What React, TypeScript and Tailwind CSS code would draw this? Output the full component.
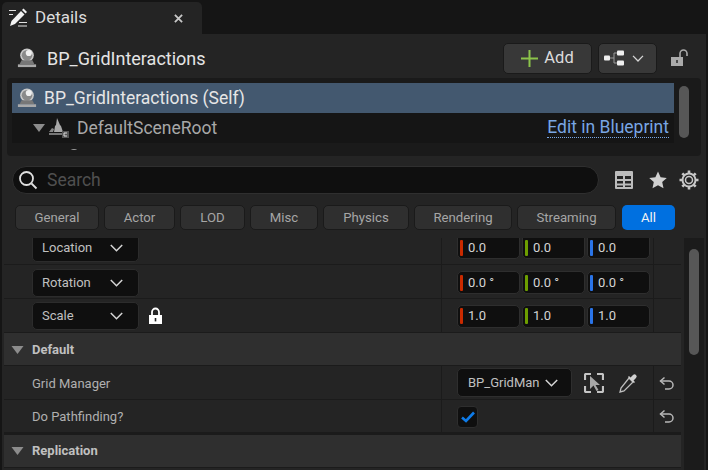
import type { ReactNode } from 'react';

const filters = [
  { label: 'General', w: 'w-[84px]' },
  { label: 'Actor', w: 'w-[71px]' },
  { label: 'LOD', w: 'w-[65px]' },
  { label: 'Misc', w: 'w-[68px]' },
  { label: 'Physics', w: 'w-[86px]' },
  { label: 'Rendering', w: 'w-[98px]' },
  { label: 'Streaming', w: 'w-[99px]' },
];

function Chevron({ className = 'w-[13px] h-[8px]' }: { className?: string }) {
  return (
    <svg viewBox="0 0 13 8" className={`${className} shrink-0`} fill="none" stroke="#d6d6d6" strokeWidth="1.500">
      <path d="M.8 1 6.500 6.800 12.200 1" />
    </svg>
  );
}

function ActorIcon({ className }: { className: string }) {
  return (
    <svg viewBox="0 0 22 22" className={className}>
      <circle cx="11" cy="8" r="7.500" fill="#c9c9c9" />
      <circle cx="11" cy="8" r="5.800" fill="#8a8a8a" />
      <circle cx="13" cy="5.500" r="3.400" fill="#efefef" />
      <path d="M5 13.500h12l2 4H3z" fill="#777" />
      <path d="M1 18h20v3H1z" fill="#a9a9a9" />
    </svg>
  );
}

function Triangle({ className }: { className: string }) {
  return (
    <svg viewBox="0 0 12 8" className={className}>
      <path d="M0 0h12L6 8z" fill="#8c8c8c" />
    </svg>
  );
}

function ResetArrow() {
  return (
    <svg viewBox="0 0 16 14" className="w-[16px] h-[14px]" fill="none" stroke="#b8b8b8" strokeWidth="1.500">
      <path d="M5.500 1.500 1.500 5l4 3.500" />
      <path d="M1.500 5H10a4 4 0 0 1 0 8H6" />
    </svg>
  );
}

function Lock() {
  return (
    <svg viewBox="0 0 15 17" className="w-[15px] h-[17px]">
      <path d="M4 8V5a3.500 3.500 0 0 1 7 0v3" fill="none" stroke="#fff" strokeWidth="1.800" />
      <path d="M1 8h13v9H1z" fill="#fff" />
      <path d="M6.700 11h1.600v3.400H6.700z" fill="#222" />
    </svg>
  );
}

function TransformSelect({ label, clipped }: { label: string; clipped?: boolean }) {
  return (
    <div
      className={`w-[107px] h-[28px] bg-[#0f0f0f] border border-[#2c2c2c] flex items-center justify-between pl-[9px] pr-[15px] text-[13px] text-[#c0c0c0] ${
        clipped ? 'rounded-b-[5px]' : 'rounded-[5px]'
      }`}
    >
      <span>{label}</span>
      <Chevron />
    </div>
  );
}

function VectorField({ value, color, clipped }: { value: string; color: string; clipped?: boolean }) {
  return (
    <div
      className={`w-[63px] h-[23px] bg-[#0f0f0f] border border-[#2e2e2e] flex items-center pl-[2px] gap-[4px] text-[13px] text-[#d4d4d4] ${
        clipped ? 'rounded-b-[5px]' : 'rounded-[5px]'
      }`}
    >
      <div className={`w-[3px] h-[16px] rounded-[1px] ${color}`} />
      <span className="ml-[1px]">{value}</span>
    </div>
  );
}

function VectorGroup({ values, clipped }: { values: string[]; clipped?: boolean }) {
  const colors = ['bg-[#c92a00]', 'bg-[#6d9e00]', 'bg-[#2a74e8]'];
  return (
    <div className="flex gap-[2px]">
      {values.map((v, i) => (
        <VectorField key={i} value={v} color={colors[i]} clipped={clipped} />
      ))}
    </div>
  );
}

function Row({ left, right, reset, height, leftAlign = 'items-center', rightAlign = 'items-center' }: {
  left: ReactNode;
  right: ReactNode;
  reset?: boolean;
  height: string;
  leftAlign?: string;
  rightAlign?: string;
}) {
  return (
    <div className={`flex ${height} bg-[#242424] border-b border-[#1b1b1b] overflow-hidden`}>
      <div className={`w-[437px] flex ${leftAlign} pl-[28px] gap-[9px]`}>{left}</div>
      <div className={`w-[212px] border-l border-[#1b1b1b] flex ${rightAlign} pl-[15px]`}>{right}</div>
      <div className="flex-1 border-l border-[#1b1b1b] flex items-center justify-center pr-[2px]">
        {reset && <ResetArrow />}
      </div>
    </div>
  );
}

function SectionHeader({ label, nudge }: { label: string; nudge?: string }) {
  return (
    <div className={`h-[33px] bg-[#2f2f2f] border-b border-[#1b1b1b] flex items-center pl-[7px] gap-[8px] ${nudge ?? ''}`}>
      <Triangle className="w-[13px] h-[8px]" />
      <span className="text-[13px] font-bold text-[#c0c0c0]">{label}</span>
    </div>
  );
}

export default function App() {
  return (
    <div className="w-[708px] h-[470px] overflow-hidden bg-[#151515] flex flex-col font-['Roboto',sans-serif]">
      {/* Tab strip */}
      <div className="h-[34px] pt-[2px] pl-[2px] flex shrink-0">
        <div className="w-[200px] h-[32px] bg-[#242424] rounded-t-[5px] flex items-center pl-[6px]">
          <svg viewBox="0 0 20 20" className="w-[20px] h-[20px]" fill="none" stroke="#e2e2e2">
            <path d="M1 2.500h7M1 6.500h4M10 18h9M11 14.500h8" strokeWidth="1.100" />
            <path d="M2 18l1.500-5L13 3l3.500 3.500L7 16z" fill="#f2f2f2" stroke="none" />
            <path d="M14 2l1.500-1.500L19 4l-1.500 1.500z" fill="#f2f2f2" stroke="none" />
          </svg>
          <span className="ml-[7px] text-[17px] text-[#dcdcdc]">Details</span>
          <svg viewBox="0 0 10 10" className="w-[9px] h-[9px] ml-[87px]" stroke="#c8c8c8" strokeWidth="2">
            <path d="M1 1l8 8M9 1l-8 8" />
          </svg>
        </div>
      </div>

      {/* Panel */}
      <div className="flex-1 ml-[2px] mr-[2px] bg-[#242424] flex flex-col min-h-0">
        {/* Actor title */}
        <div className="h-[44px] shrink-0 flex items-center pt-[4px] pl-[15px] pr-[17px]">
          <ActorIcon className="w-[20px] h-[20px]" />
          <span className="ml-[10px] text-[18px] text-[#e4e4e4]">BP_GridInteractions</span>
          <div className="ml-auto flex items-center">
            <div className="w-[89px] h-[31px] bg-[#383838] border border-[#1a1a1a] rounded-[5px] flex items-center justify-center gap-[6px]">
              <svg viewBox="0 0 17 17" className="w-[17px] h-[17px]" stroke="#8bc34a" strokeWidth="2">
                <path d="M8.500 0v17M0 8.500h17" />
              </svg>
              <span className="text-[16.5px] text-[#dcdcdc]">Add</span>
            </div>
            <div className="ml-[6px] w-[59px] h-[31px] bg-[#383838] border border-[#1a1a1a] rounded-[5px] flex items-center pl-[5px] gap-[8px]">
              <svg viewBox="0 0 20 16" className="w-[20px] h-[16px]">
                <path d="M6 8h4M10 3v10M10 3h3M10 13h3" stroke="#9a9a9a" fill="none" />
                <rect x="0" y="5.500" width="6" height="5" rx="1" fill="#f0f0f0" />
                <rect x="13" y="0.500" width="7" height="5" rx="1" fill="#f0f0f0" />
                <rect x="13" y="10.500" width="7" height="5" rx="1" fill="#f0f0f0" />
              </svg>
              <Chevron className="w-[12px] h-[7px]" />
            </div>
            <svg viewBox="0 0 18 18" className="ml-[14px] w-[18px] h-[18px]">
              <path d="M9 8V4.500a3.500 3.500 0 0 1 7 0V7" fill="none" stroke="#aaa" strokeWidth="1.600" />
              <path d="M0 8h12v9H0z" fill="#aaa" />
              <path d="M5.300 11h1.400v3H5.300z" fill="#222" />
            </svg>
          </div>
        </div>

        {/* Component tree */}
        <div className="mx-[5px] h-[78px] shrink-0 bg-[#1a1a1a] rounded-[4px] flex pl-[5px] pt-[5px] pr-[5px] overflow-hidden">
          <div className="w-[662px] flex flex-col overflow-hidden h-[67px]">
            <div className="h-[30px] shrink-0 bg-[#43586f] flex items-center pl-[5px]">
              <ActorIcon className="w-[20px] h-[20px]" />
              <span className="ml-[7px] text-[17.5px] text-[#e6e6e6]">BP_GridInteractions (Self)</span>
            </div>
            <div className="h-[30px] shrink-0 bg-[#151515] flex items-center pl-[21px] pr-[5px]">
              <Triangle className="w-[12px] h-[8px]" />
              <svg viewBox="0 0 20 20" className="ml-[4px] w-[20px] h-[20px]">
                <path d="M8 0l3 7 1 1 2 6H5l1-6 1-1z" fill="#a8a8a8" />
                <path d="M0 14l3-4 2 1-1 3z" fill="#888" />
                <path d="M0 15h13v2H0z" fill="#777" />
                <path d="M13 13h7v7h-7z" fill="#555" />
                <path d="M18 15h-3v3h3" stroke="#ddd" fill="none" />
              </svg>
              <span className="ml-[8px] text-[17.5px] text-[#a8a8a8]">DefaultSceneRoot</span>
              <span className="ml-auto text-[17.5px] text-[#79a6e4] leading-[19px] border-b border-dotted border-[#79a6e4]">
                Edit in Blueprint
              </span>
            </div>
            <div className="h-[7px] shrink-0 bg-[#1a1a1a] overflow-hidden relative">
              <div className="absolute left-[56px] top-[6px] w-[12px] h-[12px] rounded-full bg-[#999]" />
            </div>
          </div>
          <div className="ml-[5px] mt-[3px] w-[10px] h-[52px] rounded-full bg-[#575757]" />
        </div>

        {/* Search */}
        <div className="shrink-0 h-[28px] mt-[10px] ml-[10px] mr-[7px] flex items-center">
          <div className="w-[587px] h-[28px] rounded-full bg-[#0f0f0f] border border-[#2f2f2f] flex items-center pl-[5px] gap-[9px]">
            <svg viewBox="0 0 20 20" className="w-[20px] h-[20px]" fill="none" stroke="#e0e0e0" strokeWidth="1.800">
              <circle cx="8.500" cy="8.500" r="6.500" />
              <path d="M13.500 13.500 18.500 18.500" />
            </svg>
            <span className="text-[17.5px] text-[#4f4f4f]">Search</span>
          </div>
          <svg viewBox="0 0 18 18" className="ml-[16px] w-[18px] h-[18px]">
            <path fillRule="evenodd" d="M1 0h16a1 1 0 0 1 1 1v16a1 1 0 0 1-1 1H1a1 1 0 0 1-1-1V1a1 1 0 0 1 1-1zM2 5v3h6V5zM10 5v3h6V5zM2 10v2.500h6V10zM10 10v2.500h6V10zM2 14.500V16h6v-1.500zM10 14.500V16h6v-1.500z" fill="#bcbcbc" />
          </svg>
          <svg viewBox="0 0 18 18" className="ml-[16px] w-[18px] h-[18px]">
            <path d="M9 .500l2.600 5.700 6.200.7-4.600 4.200 1.300 6.100L9 14.200l-5.500 3 1.300-6.100L.2 6.900l6.200-.7z" fill="#d0d0d0" />
          </svg>
          <svg viewBox="0 0 20 20" className="ml-[12px] w-[20px] h-[20px]" fill="none" stroke="#c8c8c8">
            <circle cx="10" cy="10" r="6.500" strokeWidth="2" />
            <circle cx="10" cy="10" r="3.500" strokeWidth="1.500" />
            <path d="M10 .500v3M10 16.500v3M.5 10h3M16.500 10h3M3.300 3.300l2.100 2.100M14.600 14.600l2.100 2.100M3.300 16.700l2.100-2.100M14.600 5.400l2.100-2.100" strokeWidth="2.600" />
          </svg>
        </div>

        {/* Filter pills */}
        <div className="shrink-0 h-[25px] mt-[11px] ml-[13px] flex gap-[5px]">
          {filters.map((f) => (
            <div
              key={f.label}
              className={`${f.w} bg-[#2f2f2f] border border-[#1a1a1a] rounded-[5px] flex items-center justify-center text-[13.2px] text-[#a6a6a6]`}
            >
              {f.label}
            </div>
          ))}
          <div className="w-[53px] ml-[1px] bg-[#0070e0] rounded-[5px] flex items-center justify-center text-[13.2px] text-[#f2f2f2]">
            All
          </div>
        </div>

        {/* Property list */}
        <div className="flex-1 mt-[8px] flex min-h-0 overflow-hidden">
          <div className="w-[677px] ml-[2px] flex flex-col">
            <Row
              height="h-[27px]"
              leftAlign="items-end pb-[2px]"
              rightAlign="items-end pb-[5px]"
              left={<TransformSelect label="Location" clipped />}
              right={<VectorGroup values={['0.0', '0.0', '0.0']} clipped />}
            />
            <Row
              height="h-[34px]"
              leftAlign="items-center pt-[2px]"
              rightAlign="items-center pt-[2px]"
              left={<TransformSelect label="Rotation" />}
              right={<VectorGroup values={['0.0 °', '0.0 °', '0.0 °']} />}
            />
            <Row
              height="h-[34px]"
              leftAlign="items-center"
              rightAlign="items-center pt-[1px]"
              left={
                <>
                  <TransformSelect label="Scale" />
                  <Lock />
                </>
              }
              right={<VectorGroup values={['1.0', '1.0', '1.0']} />}
            />
            <SectionHeader label="Default" nudge="pt-[2px]" />
            <Row
              height="h-[34px]"
              reset
              leftAlign="items-center pt-[2px]"
              left={<span className="text-[13px] text-[#b0b0b0]">Grid Manager</span>}
              right={
                <>
                  <div className="w-[115px] h-[29px] bg-[#0f0f0f] border border-[#2e2e2e] rounded-[5px] flex items-center pl-[10px] gap-[5px] text-[13px] text-[#c0c0c0]">
                    <span>BP_GridMan</span>
                    <Chevron />
                  </div>
                  <svg viewBox="0 0 20 20" className="ml-[12px] w-[20px] h-[20px]" fill="none" stroke="#c4c4c4" strokeWidth="2.200">
                    <path d="M7 1H2a1 1 0 0 0-1 1v5M13 1h5a1 1 0 0 1 1 1v5M1 13v5a1 1 0 0 0 1 1h5M19 13v5a1 1 0 0 1-1 1h-5" />
                    <path d="M6 3v13l3.500-3.500 3 5.500 2-1-3-5H16z" fill="#a8a8a8" stroke="none" />
                  </svg>
                  <svg viewBox="0 0 20 20" className="ml-[14px] w-[20px] h-[20px]" fill="none">
                    <path d="M11 5 15 9 6 18l-4 1 1-4z" stroke="#bdbdbd" strokeWidth="1.300" />
                    <path d="M10 4l6 6 1-1-1.500-1.500 2.500-2.500a2 2 0 0 0-3-3l-2.500 2.500L11 3z" fill="#d0d0d0" />
                  </svg>
                </>
              }
            />
            <Row
              height="h-[33px]"
              reset
              leftAlign="items-center pt-[2px]"
              rightAlign="items-center pt-[2px]"
              left={<span className="text-[13px] text-[#b0b0b0]">Do Pathfinding?</span>}
              right={
                <div className="w-[21px] h-[22px] bg-[#0f0f0f] border border-[#2e2e2e] rounded-[4px] flex items-center justify-center">
                  <svg viewBox="0 0 14 12" className="w-[14px] h-[12px]" fill="none" stroke="#0e7be8" strokeWidth="2.600">
                    <path d="M1 6.500 5 10 13 1.500" />
                  </svg>
                </div>
              }
            />
            <div className="h-[2px] bg-[#1b1b1b]" />
            <SectionHeader label="Replication" />
          </div>
          <div className="w-[20px] ml-[3px] bg-[#1b1b1b] flex justify-center pt-[11px]">
            <div className="w-[10px] h-[106px] rounded-full bg-[#575757]" />
          </div>
        </div>
      </div>
    </div>
  );
}
